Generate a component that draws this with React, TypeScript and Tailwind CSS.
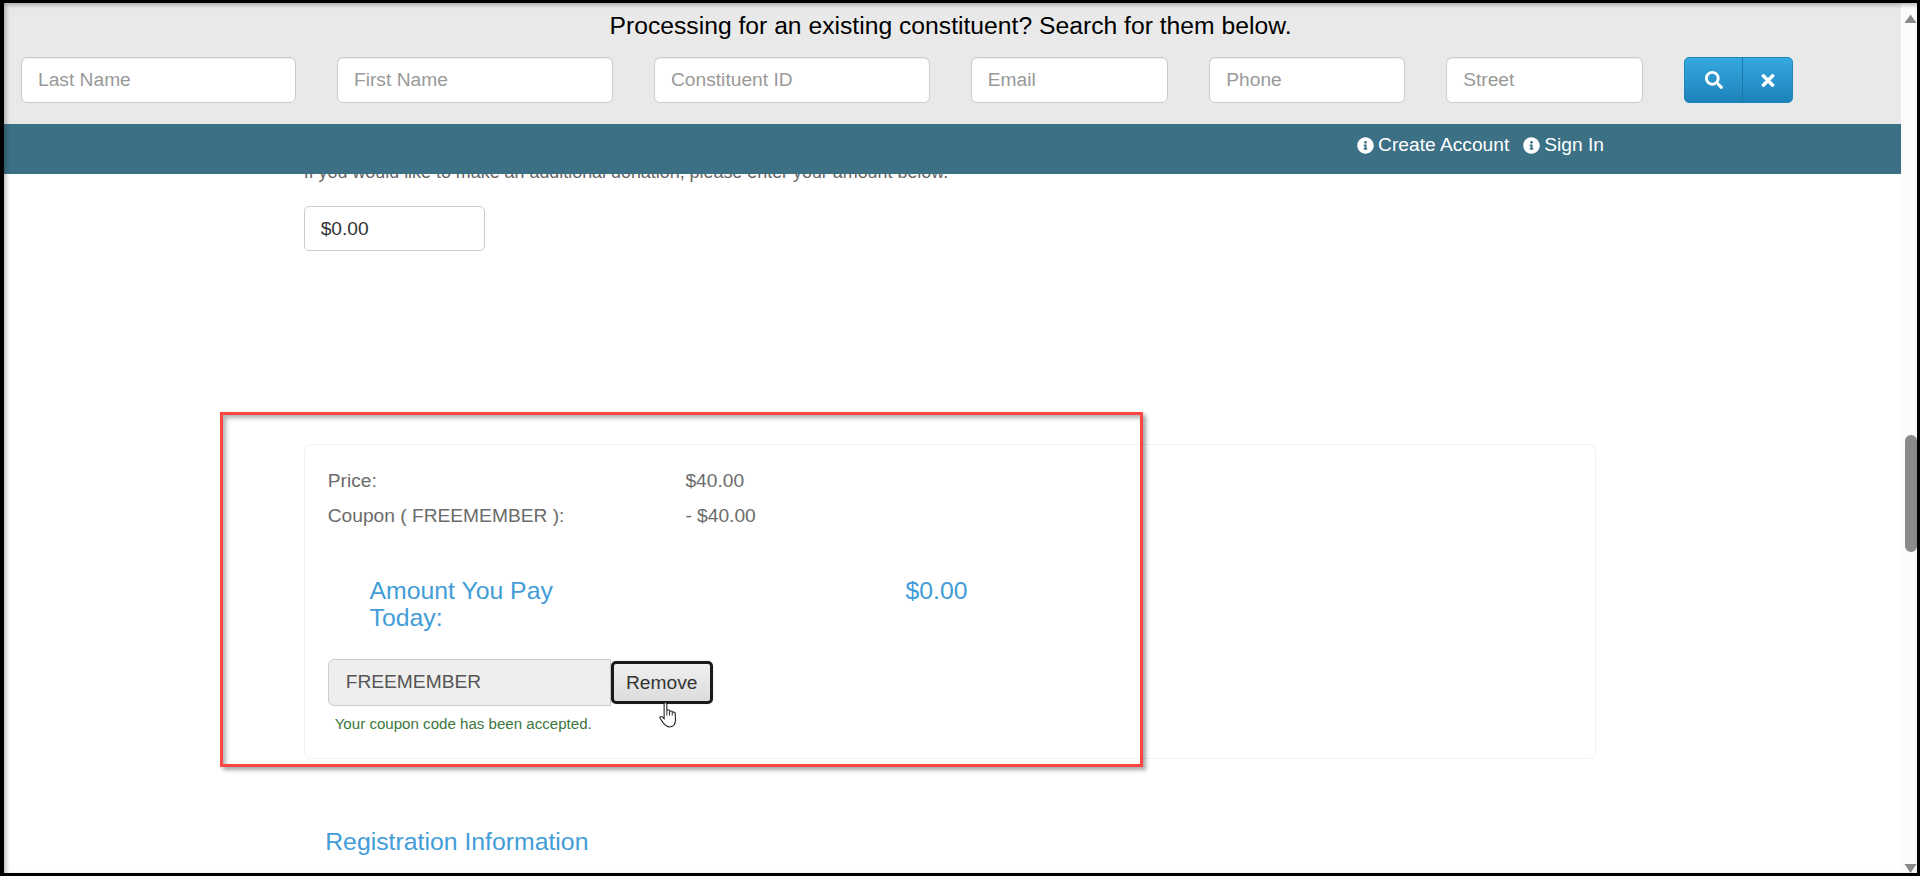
import { FaInfoCircle, FaSearch, FaTimes } from "react-icons/fa";

const font = "font-['Liberation_Sans',Arial,sans-serif]";
const fieldClass =
  "h-[46px] rounded-[6px] border border-[#cccccc] bg-white px-[16px] text-[19.2px] text-[#555555] placeholder:text-[#999999] shadow-[inset_0_1px_1px_rgba(0,0,0,0.075)] outline-none";

export default function App() {
  return (
    <div className={`${font} relative flex h-[876px] w-[1920px] overflow-hidden border-y-[3px] border-l-[4px] border-r-[3px] border-black bg-white`}>
      <main className="flex min-w-0 flex-1 flex-col">
        <header className="h-[121px] shrink-0 bg-[#e9e9e9]">
          <div className="pr-[4px] text-center text-[24.7px] leading-[46px] text-black">
            Processing for an existing constituent? Search for them below.
          </div>
          <div className="mt-[8px] flex items-start gap-[41.5px] pl-[17px]">
            <input className={`${fieldClass} w-[274.5px]`} placeholder="Last Name" readOnly />
            <input className={`${fieldClass} w-[275.5px]`} placeholder="First Name" readOnly />
            <input className={`${fieldClass} mr-[-0.7px] w-[276px]`} placeholder="Constituent ID" readOnly />
            <input className={`${fieldClass} w-[197px]`} placeholder="Email" readOnly />
            <input className={`${fieldClass} mr-[-0.7px] w-[196px]`} placeholder="Phone" readOnly />
            <input className={`${fieldClass} w-[196.7px]`} placeholder="Street" readOnly />
            <div className="flex h-[46px] w-[109px] overflow-hidden rounded-[5px] border border-[#1f86bd] bg-gradient-to-b from-[#36a9e1] to-[#1c82b9] text-white">
              <button className="flex w-[58px] items-center justify-center border-r border-[#1a78ab]">
                <FaSearch className="h-[18px] w-[18px]" />
              </button>
              <button className="flex flex-1 items-center justify-center">
                <FaTimes className="h-[19px] w-[14px]" />
              </button>
            </div>
          </div>
        </header>

        <nav className="relative z-10 flex h-[50px] shrink-0 items-start justify-end gap-[14px] bg-[#3c7085] pr-[297px] pt-[8px] text-[19.2px] leading-[26px] text-white">
          <a className="flex items-center gap-[4px]">
            <FaInfoCircle className="h-[17px] w-[17px]" />
            Create Account
          </a>
          <a className="flex items-center gap-[4px]">
            <FaInfoCircle className="h-[17px] w-[17px]" />
            Sign In
          </a>
        </nav>

        <section className="min-h-0 flex-1 pl-[299.7px]">
          <p className="-mt-[16px] text-[17.9px] leading-[28px] text-[#666666]">
            If you would like to make an additional donation, please enter your amount below.
          </p>
          <input
            className="mt-[20px] block h-[45px] w-[181px] rounded-[5px] border border-[#cccccc] bg-white px-[16px] text-[19.2px] text-[#333333] outline-none"
            value="$0.00"
            readOnly
          />

          <div className="mt-[193px] h-[315px] w-[1292px] rounded-[7px] border border-[#f2f2f2] pl-[23px] pt-[17.5px] text-[19.2px] leading-[35px] text-[#6b6b6b]">
            <div className="flex">
              <span className="w-[357.7px]">Price:</span>
              <span>$40.00</span>
            </div>
            <div className="flex">
              <span className="w-[357.7px]">Coupon ( FREEMEMBER ):</span>
              <span>- $40.00</span>
            </div>
            <div className="mt-[44px] flex pl-[41.8px] text-[24.8px] leading-[27.5px] text-[#429cd7]">
              <span className="w-[536px] pr-[330px]">Amount You Pay Today:</span>
              <span>$0.00</span>
            </div>
            <div className="mt-[27px] flex items-center">
              <input
                className="h-[47px] w-[283px] rounded-l-[6px] border border-[#cccccc] bg-[#eeeeee] px-[17px] text-[19.2px] text-[#555555] outline-none"
                value="FREEMEMBER"
                readOnly
              />
              <button className="h-[43px] w-[102px] rounded-[5px] border-[3px] border-[#1a1a1a] bg-gradient-to-b from-[#f0f0f0] to-[#dcdcdc] text-[19.2px] text-[#333333] shadow-[0_0_2px_rgba(0,0,0,0.15)]">
                Remove
              </button>
            </div>
            <p className="ml-[7px] mt-[8px] text-[15.1px] leading-[20px] text-[#3c763d]">
              Your coupon code has been accepted.
            </p>
          </div>

          <h2 className="ml-[21.5px] mt-[66px] text-[24.8px] font-normal leading-[34px] text-[#429cd7]">
            Registration Information
          </h2>
        </section>
      </main>

      <aside className="relative z-10 flex w-[16px] shrink-0 flex-col items-center bg-[#fcfcfc] pl-[3px] pt-[11px]">
        <svg width="13" height="9" viewBox="0 0 13 9" className="shrink-0">
          <path d="M6.5 0.5 L12.5 9 L0.5 9 Z" fill="#8a8a8a" />
        </svg>
        <div className="mt-[412px] h-[117px] w-[12px] shrink-0 rounded-[6px] bg-[#8a8a8a]" />
        <svg width="13" height="9" viewBox="0 0 13 9" className="mt-auto shrink-0">
          <path d="M0.5 0 L12.5 0 L6.5 9 Z" fill="#8a8a8a" />
        </svg>
      </aside>

      {/* darker strip where the nav runs past the screenshot's frame */}
      <div className="absolute -left-[4px] top-[121px] z-20 h-[50px] w-[2px] bg-[#2b5363]" />
      {/* inner frame shadow */}
      <div className="pointer-events-none absolute inset-0 z-20 shadow-[inset_2px_2px_4px_rgba(0,0,0,0.28)]" />
      {/* annotation rectangle */}
      <div className="pointer-events-none absolute left-[216px] top-[409px] z-30 h-[355px] w-[923px] border-[3.5px] border-[#ff4444] shadow-[3px_3px_4px_rgba(0,0,0,0.35),inset_3px_3px_4px_rgba(0,0,0,0.3)]" />
      {/* mouse pointer */}
      <svg
        width="20"
        height="26"
        viewBox="0 0 18 24"
        className="pointer-events-none absolute left-[655px] top-[699px] z-30"
      >
        <path
          d="M4.5 1.8 C4.5 0.3 7 0.3 7 1.8 L7 8 C7 6.8 9.5 6.8 9.5 8 L9.5 9 C9.5 8 12 8 12 9 L12 10 C12 9 14.7 9 14.7 10.5 L15 16 C15 20 13.2 23 9.8 23 C6.8 23 5.3 21.5 3.3 18.8 L0.9 15.3 C0 13.8 1.6 12.6 3 14 L4.5 15.5 Z"
          fill="#ffffff"
          stroke="#222222"
          strokeWidth="1"
        />
        <path d="M7 8 L7 12.5 M9.5 9 L9.5 12.5 M12 10 L12 12.5" fill="none" stroke="#222222" strokeWidth="0.9" />
      </svg>
    </div>
  );
}
